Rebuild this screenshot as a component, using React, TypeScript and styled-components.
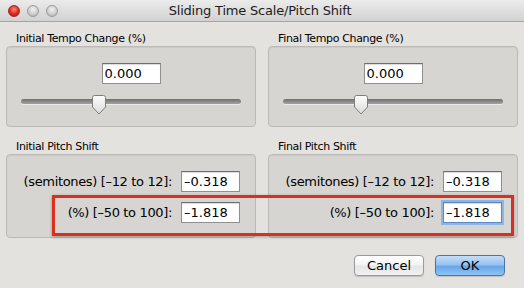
import styled, { createGlobalStyle } from "styled-components";

const GlobalStyle = createGlobalStyle`
  html, body {
    margin: 0;
    padding: 0;
    background: #e4e2df;
  }
  * {
    box-sizing: border-box;
  }
`;

const FONT = `"DejaVu Sans", "Liberation Sans", sans-serif`;

const Window = styled.div`
  position: relative;
  width: 524px;
  height: 288px;
  background: #e4e2df;
  font-family: ${FONT};
  color: #111;
  overflow: hidden;
`;

const TitleBar = styled.div`
  height: 22px;
  display: flex;
  align-items: center;
  background: linear-gradient(#ebebeb, #d2d2d2);
  border-bottom: 1px solid #a5a5a5;
`;

const Lights = styled.div`
  display: flex;
  gap: 7px;
  padding-left: 8px;
`;

const Light = styled.span<{ red?: boolean }>`
  width: 12px;
  height: 12px;
  border-radius: 50%;
  background: ${(p) =>
    p.red
      ? "radial-gradient(circle at 50% 35%, #ff8b80 0%, #e0271a 55%, #a3140c 100%)"
      : "radial-gradient(circle at 50% 35%, #f2f2f2 0%, #cfcfcf 55%, #a8a8a8 100%)"};
  border: 1px solid ${(p) => (p.red ? "#9e2a22" : "#9b9b9b")};
`;

const Title = styled.div`
  flex: 1;
  text-align: center;
  font-size: 13px;
  color: #1c1c1c;
  margin-right: 62px;
  letter-spacing: -0.2px;
`;

const Body = styled.div`
  padding: 9px 6px 0 6px;
`;

const Columns = styled.div<{ gapTop?: number }>`
  display: grid;
  grid-template-columns: 250px 250px;
  column-gap: 12px;
  margin-top: ${(p) => p.gapTop ?? 0}px;
`;

const Group = styled.div`
  display: flex;
  flex-direction: column;
`;

const GroupLabel = styled.div`
  font-size: 11px;
  padding-left: 10px;
  height: 15px;
  line-height: 15px;
  color: #000;
  letter-spacing: -0.35px;
`;

const GroupBox = styled.div<{ h: number }>`
  height: ${(p) => p.h}px;
  background: #d7d5d2;
  border: 1px solid #bcbab7;
  border-radius: 4px;
  box-shadow: inset 0 1px 1px rgba(0, 0, 0, 0.06);
`;

const TempoBox = styled(GroupBox)`
  display: flex;
  flex-direction: column;
  align-items: center;
  padding-top: 16px;
`;

const NumInput = styled.div<{ focused?: boolean }>`
  width: 59px;
  height: 21px;
  background: #fff;
  border: 1px solid ${(p) => (p.focused ? "#5b87c2" : "#8f8f8f")};
  border-top-color: ${(p) => (p.focused ? "#5b87c2" : "#6e6e6e")};
  box-shadow: ${(p) =>
    p.focused
      ? "0 0 0 2px #8fb5e3, inset 0 1px 1px rgba(0,0,0,0.15)"
      : "inset 0 1px 1px rgba(0,0,0,0.15)"};
  font-size: 13px;
  line-height: 19px;
  padding-left: 2px;
  color: #000;
`;

const SliderWrap = styled.div`
  position: relative;
  width: 220px;
  height: 26px;
  margin-top: 6px;
`;

const Track = styled.div`
  position: absolute;
  left: 0;
  right: 0;
  top: 9px;
  height: 5px;
  border-radius: 3px;
  background: linear-gradient(#6f6f6f, #a3a3a3);
  box-shadow: 0 1px 0 rgba(255, 255, 255, 0.5);
`;

const Thumb = styled.svg`
  position: absolute;
  left: 70px;
  top: 5px;
`;

const PitchBox = styled(GroupBox)`
  display: flex;
  flex-direction: column;
  align-items: flex-end;
  padding: 16px 15px 0 0;
  gap: 10px;
`;

const Row = styled.div`
  display: flex;
  align-items: center;
  gap: 9px;
`;

const RowLabel = styled.span`
  font-size: 13px;
  letter-spacing: -0.35px;
  color: #000;
`;

const Footer = styled.div`
  display: flex;
  justify-content: flex-end;
  gap: 11px;
  padding: 17px 13px 0 0;
`;

const Button = styled.div<{ primary?: boolean }>`
  width: 70px;
  height: 21px;
  border-radius: 4px;
  display: flex;
  align-items: center;
  justify-content: center;
  font-size: 13px;
  color: #000;
  border: 1px solid ${(p) => (p.primary ? "#4a73aa" : "#9a9a9a")};
  background: ${(p) =>
    p.primary
      ? "linear-gradient(#c6def8 0%, #97c1ef 45%, #6aa6e8 55%, #8cc4f4 100%)"
      : "linear-gradient(#ffffff 0%, #f4f4f4 45%, #e6e6e6 55%, #f2f2f2 100%)"};
  box-shadow: 0 1px 1px rgba(0, 0, 0, 0.15);
`;

const Highlight = styled.div`
  position: absolute;
  left: 52px;
  top: 195px;
  width: 462px;
  height: 41px;
  border: 3px solid #d8301c;
  box-shadow: 0 1px 3px rgba(0, 0, 0, 0.3);
  pointer-events: none;
`;

function Slider() {
  return (
    <SliderWrap>
      <Track />
      <Thumb width="16" height="20" viewBox="0 0 16 20">
        <defs>
          <linearGradient id="thumbFill" x1="0" y1="0" x2="0" y2="1">
            <stop offset="0" stopColor="#fdfdfd" />
            <stop offset="1" stopColor="#dcdcdc" />
          </linearGradient>
        </defs>
        <path
          d="M1.5 2.5 Q1.5 0.5 3.5 0.5 H12.5 Q14.5 0.5 14.5 2.5 V12 L8 19 L1.5 12 Z"
          fill="url(#thumbFill)"
          stroke="#7d7d7d"
          strokeWidth="1"
        />
      </Thumb>
    </SliderWrap>
  );
}

function TempoGroup({ label }: { label: string }) {
  return (
    <Group>
      <GroupLabel>{label}</GroupLabel>
      <TempoBox h={81}>
        <NumInput>0.000</NumInput>
        <Slider />
      </TempoBox>
    </Group>
  );
}

function PitchGroup({ label, focused }: { label: string; focused?: boolean }) {
  return (
    <Group>
      <GroupLabel>{label}</GroupLabel>
      <PitchBox h={84}>
        <Row>
          <RowLabel>(semitones) [–12 to 12]:</RowLabel>
          <NumInput>–0.318</NumInput>
        </Row>
        <Row>
          <RowLabel>(%) [–50 to 100]:</RowLabel>
          <NumInput focused={focused}>–1.818</NumInput>
        </Row>
      </PitchBox>
    </Group>
  );
}

export default function App() {
  return (
    <>
      <GlobalStyle />
      <Window>
        <TitleBar>
          <Lights>
            <Light red />
            <Light />
            <Light />
          </Lights>
          <Title>Sliding Time Scale/Pitch Shift</Title>
        </TitleBar>
        <Body>
          <Columns>
            <TempoGroup label="Initial Tempo Change (%)" />
            <TempoGroup label="Final Tempo Change (%)" />
          </Columns>
          <Columns gapTop={12}>
            <PitchGroup label="Initial Pitch Shift" />
            <PitchGroup label="Final Pitch Shift" focused />
          </Columns>
          <Footer>
            <Button>Cancel</Button>
            <Button primary>OK</Button>
          </Footer>
        </Body>
        <Highlight />
      </Window>
    </>
  );
}
